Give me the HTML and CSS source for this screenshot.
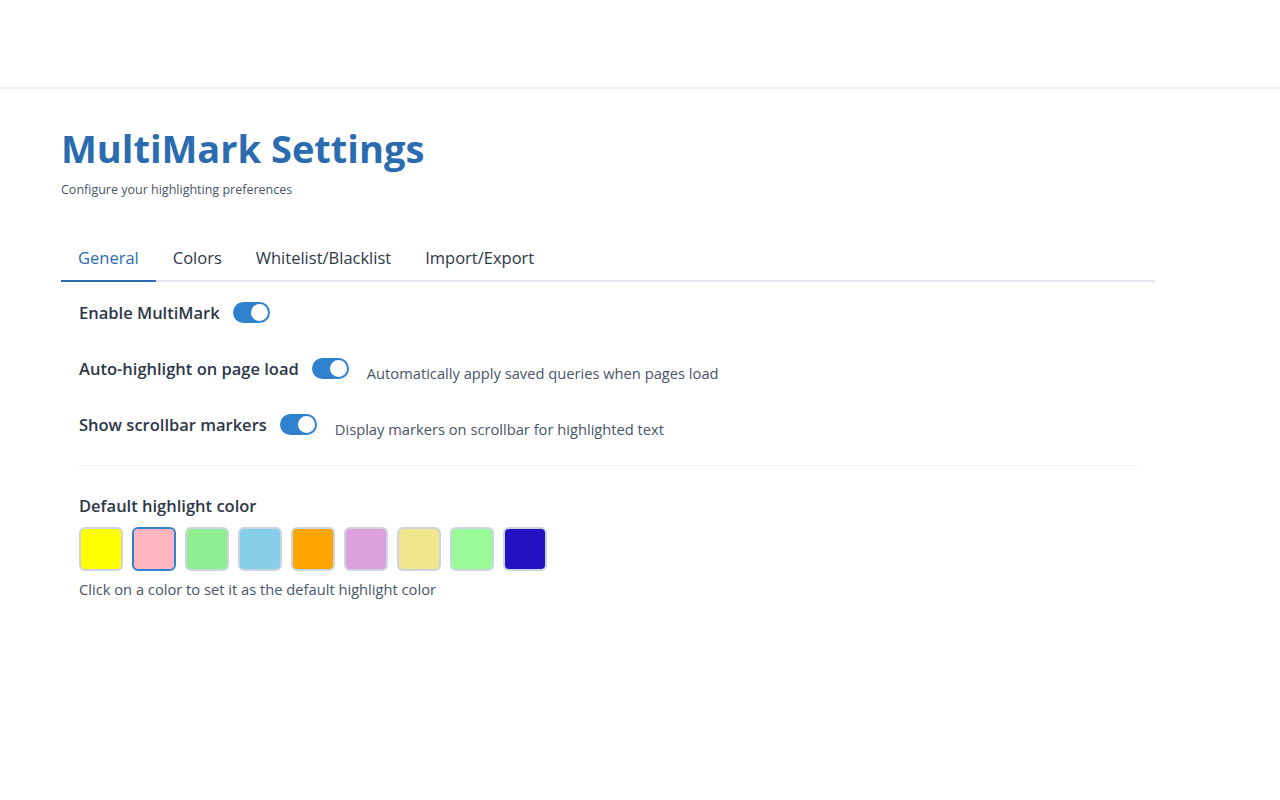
FILE: index.html
```html
<!DOCTYPE html>
<html>

<head>
  <title>MultiMark Settings</title>
  <link rel="stylesheet" href="styles.css">
</head>

<body>
  <div class="topbar"></div>

  <div class="container">
    <h1>MultiMark Settings</h1>
    <p class="subtitle">Configure your highlighting preferences</p>

    <div class="tabs">
      <button class="tab active">General</button>
      <button class="tab">Colors</button>
      <button class="tab">Whitelist/Blacklist</button>
      <button class="tab">Import/Export</button>
    </div>

    <div class="panel">
      <div class="setting">
        <span class="setting-label">Enable MultiMark</span>
        <span class="toggle on"><span class="knob"></span></span>
      </div>

      <div class="setting">
        <span class="setting-label">Auto-highlight on page load</span>
        <span class="toggle on"><span class="knob"></span></span>
        <span class="setting-desc">Automatically apply saved queries when pages load</span>
      </div>

      <div class="setting">
        <span class="setting-label">Show scrollbar markers</span>
        <span class="toggle on"><span class="knob"></span></span>
        <span class="setting-desc">Display markers on scrollbar for highlighted text</span>
      </div>

      <hr class="divider">

      <div class="color-section">
        <div class="setting-label">Default highlight color</div>
        <div class="swatches">
          <span class="swatch" style="background:#ffff00"></span>
          <span class="swatch selected" style="background:#ffb6c1"></span>
          <span class="swatch" style="background:#90ee90"></span>
          <span class="swatch" style="background:#87ceeb"></span>
          <span class="swatch" style="background:#ffa500"></span>
          <span class="swatch" style="background:#dda0dd"></span>
          <span class="swatch" style="background:#f0e68c"></span>
          <span class="swatch" style="background:#98fb98"></span>
          <span class="swatch" style="background:#2510c2"></span>
        </div>
        <p class="hint">Click on a color to set it as the default highlight color</p>
      </div>
    </div>
  </div>
</body>

</html>
```

FILE: styles.css
```css
/* Base */
body {
  margin: 0;
  font-family: "Open Sans", "Noto Sans", Arial, sans-serif;
  color: #2d3748;
  background-color: #fff;
}

/* Empty strip above the page */
.topbar {
  height: 87px;
  border-bottom: 2px solid #eeeeee;
}

.container {
  width: 1094px;
  margin-left: 61px;
  padding-top: 37px;
}

/* Title */
h1 {
  font-size: 38px;
  font-weight: 700;
  color: #2b6cb0;
  margin: 0;
  line-height: 1.2;
}

.subtitle {
  font-size: 12.5px;
  color: #4a5568;
  margin: 9px 0 0;
}

/* Tabs */
.tabs {
  display: flex;
  margin-top: 38px;
  border-bottom: 2px solid #e2e8f0;
}

.tab {
  font-family: inherit;
  font-size: 16.5px;
  color: #2d3748;
  background: none;
  border: none;
  border-bottom: 2px solid transparent;
  margin-bottom: -2px;
  padding: 10px 17px 11px;
  cursor: pointer;
}

.tab.active {
  color: #2b6cb0;
  border-bottom-color: #2b6cb0;
}

/* Panel content */
.panel {
  padding: 15px 18px 10px;
}

.setting {
  display: flex;
  align-items: center;
  margin-bottom: 24px;
  min-height: 32px;
}

.setting-label {
  font-size: 16.5px;
  font-weight: 600;
  color: #2d3748;
}

.setting-desc {
  font-size: 14.7px;
  color: #4a5568;
  margin-left: 18px;
  margin-top: 8px;
}

/* Toggle switch */
.toggle {
  display: inline-flex;
  align-items: center;
  justify-content: flex-end;
  width: 37px;
  height: 21px;
  border-radius: 11px;
  background-color: #3182ce;
  margin-left: 13px;
  padding: 0 2px;
  box-sizing: border-box;
}

.knob {
  width: 17px;
  height: 17px;
  border-radius: 50%;
  background-color: #fff;
}

.divider {
  border: none;
  border-top: 1px solid #edf0f5;
  margin: 0 0 28px;
}

/* Colour swatches */
.swatches {
  display: flex;
  gap: 9px;
  margin-top: 10px;
}

.swatch {
  width: 40px;
  height: 40px;
  border: 2px solid #cbd5e0;
  border-radius: 6px;
  cursor: pointer;
}

.swatch.selected {
  border-color: #3182ce;
}

.hint {
  font-size: 14.7px;
  color: #4a5568;
  margin: 8px 0 0;
}
```
